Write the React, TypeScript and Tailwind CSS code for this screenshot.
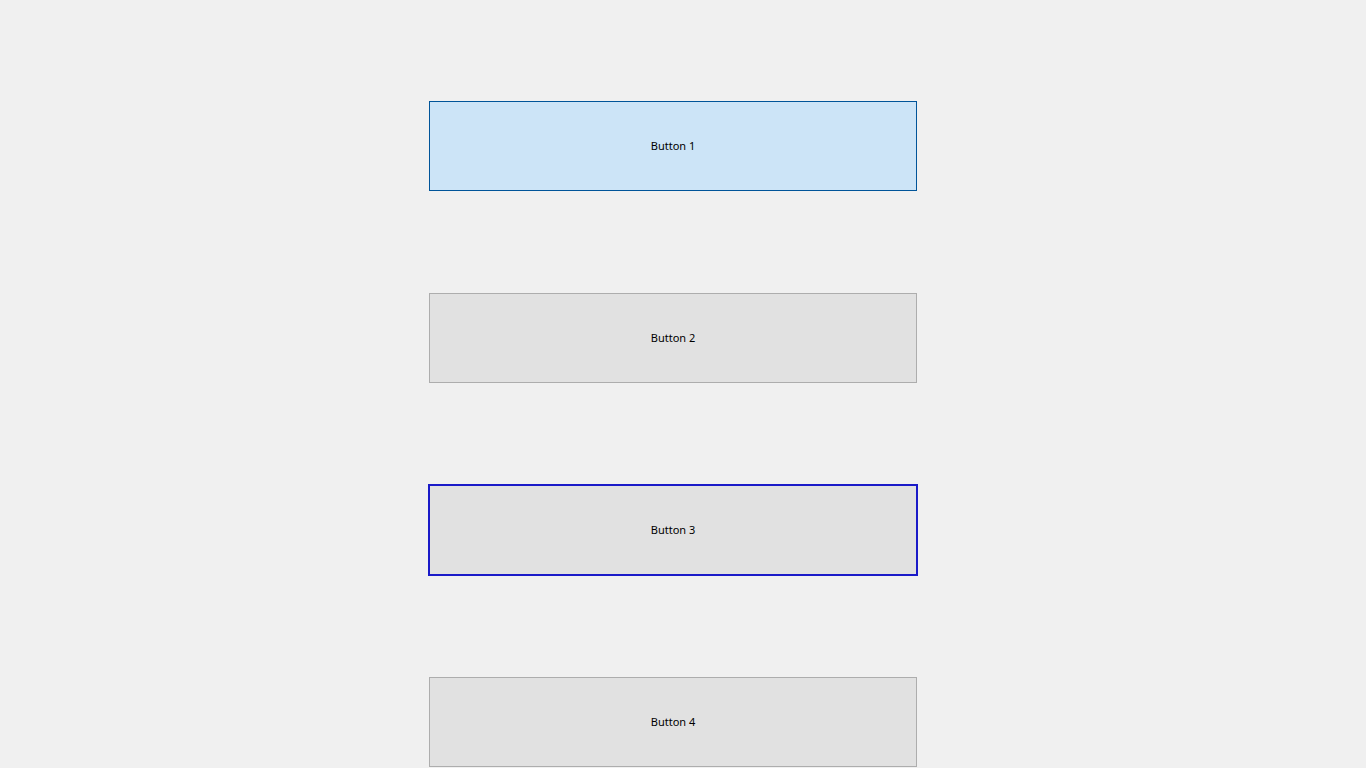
export default function App() {
  const base =
    "w-[488px] h-[90px] flex items-center justify-center pt-px text-[11px] text-black";
  return (
    <div
      className="min-h-screen h-[768px] overflow-hidden bg-[#f0f0f0] pl-[429px] pt-[101px] flex flex-col gap-[102px]"
      style={{ fontFamily: '"Segoe UI", "Noto Sans", "Liberation Sans", sans-serif' }}
    >
      {/* hovered */}
      <button className={`${base} bg-[#cce4f7] border border-[#005499]`}>Button 1</button>
      <button className={`${base} bg-[#e1e1e1] border border-[#adadad]`}>Button 2</button>
      {/* focused */}
      <button
        className={`${base} -mx-px -my-px w-[490px] h-[92px] bg-[#e1e1e1] border-2 border-[#1a1ac8]`}
      >
        Button 3
      </button>
      <button className={`${base} bg-[#e1e1e1] border border-[#adadad]`}>Button 4</button>
    </div>
  );
}
